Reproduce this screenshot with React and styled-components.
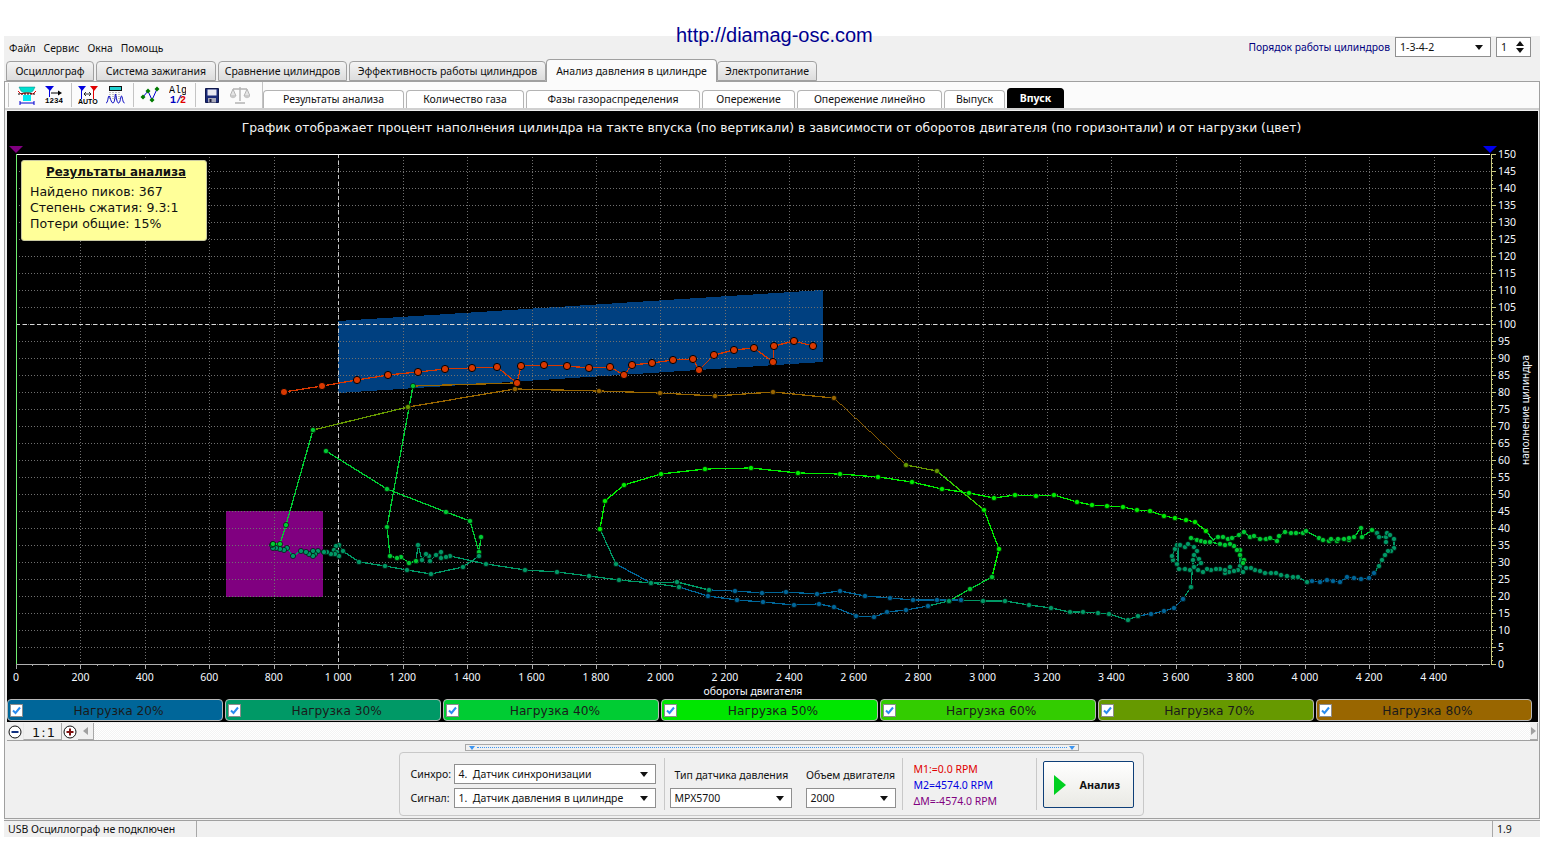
import React from "react";
import styled, { createGlobalStyle } from "styled-components";

const UI_FONT = `"Noto Sans", "DejaVu Sans", sans-serif`;
const CHART_FONT = `"DejaVu Sans", "Noto Sans", sans-serif`;

const C20 = "#006699";
const C30 = "#009966";
const C40 = "#00cc33";
const C50 = "#00ee00";
const C60 = "#33cc00";
const C70 = "#669900";
const C80 = "#996600";
const CRED = "#d83800";

// points read off the right part of the plot at 3x
const band = (pts) => pts.map(([x, y]) => [1000 + x / 3, 480 + y / 3]);

const traces = [
  { color: CRED, big: true, pts: [[284,392],[322,386],[357,380],[388,375],[418,372],[445,369],[472,368],[497,367],[517,383],[521,366],[544,365],[567,366],[589,368],[610,367],[624,375],[632,365],[652,363],[673,360],[693,359],[699,370],[714,355],[734,350],[754,348],[773,362],[774,346],[794,341],[813,346]] },
  { color: C80, pts: [[413,386],[515,383]], noDots: true },
  { color: C80, pts: [[408,407],[515,389],[599,391],[660,393],[715,396],[773,392],[834,398]] },
  { color: C80, pts: [[834,398],[906,465]], noDots: true, thin: true },
  { color: C70, pts: [[906,465],[937,471]] },
  { color: C70, pts: [[313,430],[408,407]] },
  { color: C60, pts: [[937,471],[984,510]], noDots: true },
  { color: C50, pts: [[984,510],[999,549],[992,577]] },
  { color: C40, pts: [[992,577],[970,589],[949,601]] },
  { color: C30, pts: [[949,601],[928,606]] },
  { color: C20, pts: [[928,606],[906,610],[887,612],[874,617],[856,616],[834,607],[819,604],[794,605],[763,602],[737,600],[708,596],[679,587]] },
  { color: C30, pts: [[679,587],[651,583]] },
  { color: C20, pts: [[651,583],[616,564]], noDots: true },
  { color: C30, pts: [[616,564],[600,529]] },
  { color: C50, pts: [[600,529],[605,501],[624,485],[661,474],[705,469],[751,468],[798,473],[840,474],[878,477],[912,482],[942,489],[969,493],[994,498],[1015,495],[1036,496],[1054,495],[1077,502],[1092,505],[1107,506],[1123,507],[1137,510],[1150,511],[1164,516],[1175,518],[1186,520],[1195,522],[1206,531]] },
  { color: C40, pts: [[1206,531],[1213,540]], noDots: true },
  { color: C40, pts: band([[573,174],[591,180],[603,183],[615,186],[630,186],[654,171],[669,171],[684,177],[696,174],[717,165],[732,156],[750,171],[762,168],[780,177],[798,177],[810,174],[831,183],[837,168],[855,156],[873,159],[888,159],[909,159],[918,153],[957,174],[969,180],[987,183],[993,177],[1011,183],[1014,177],[1032,177],[1047,180],[1047,174],[1062,171],[1083,144],[1086,171],[1116,150],[1131,159]]) },
  { color: C30, pts: band([[1131,159],[1137,171],[1158,171],[1158,186],[1161,159],[1170,165],[1182,177],[1182,204],[1173,213],[1164,213],[1155,225],[1146,240],[1137,258],[1122,279]]) },
  { color: C20, pts: band([[1122,279],[1107,294],[1083,297],[1062,294],[1041,291],[1020,306],[999,303],[981,300],[960,306],[936,303],[921,306]]) },
  { color: C30, pts: band([[921,306],[894,291],[879,291],[861,288],[843,285],[828,279],[813,279],[795,279],[780,273],[765,270],[753,264],[738,264],[729,276],[720,258],[714,270],[702,273],[690,261],[687,276],[675,279],[675,270],[660,267],[648,267],[633,270],[621,267],[609,276],[594,270],[582,261],[570,270],[555,267],[537,267],[531,252],[519,240],[516,228],[525,207],[531,195],[540,195]]) },
  { color: C30, pts: band([[540,195],[555,201],[564,192],[582,201],[591,213],[582,225],[597,237],[603,249],[582,261],[579,240],[573,321]]) },
  { color: C40, pts: band([[732,240],[729,249],[720,225],[720,210],[711,210],[702,198],[690,192],[675,195],[660,192],[630,186]]) },
  { color: C30, pts: band([[534,195],[534,252]]), noDots: true },
  { color: C30, pts: band([[720,225],[720,258]]), noDots: true },
  { color: C30, pts: band([[573,321],[549,357]]) },
  { color: C20, pts: band([[549,357],[522,384],[492,393],[453,402],[414,408]]) },
  { color: C30, pts: [...band([[414,408],[384,420],[327,402],[294,399],[249,396],[210,396],[153,384],[87,375],[15,363]]), [983,601],[961,600]] },
  { color: C20, pts: [[961,600],[937,600],[913,600],[890,598],[865,596],[840,591],[817,594],[786,592],[762,593],[735,591],[709,590]] },
  { color: C30, pts: [[709,590],[677,582],[651,583],[619,580],[589,576],[557,572],[525,570],[486,564],[450,556],[446,557],[441,558],[441,552],[436,555],[430,561],[429,556],[426,554],[422,560],[418,545],[416,561]] },
  { color: C40, pts: [[416,561],[409,563],[401,557],[397,558],[390,556],[387,527],[413,386]] },
  { color: C40, pts: [[326,451],[387,489],[446,512],[470,521],[479,552],[481,537]] },
  { color: C30, pts: [[479,556],[463,567],[431,574],[407,570],[385,566],[359,562],[343,551],[339,545],[336,546],[334,550],[337,552],[339,556],[335,554],[331,554],[327,552],[324,552]] },
  { color: C30, pts: [[324,552],[318,551],[315,554],[313,551],[313,556],[309,554],[306,552],[301,551],[293,556],[287,548],[284,550],[280,549],[276,548],[273,548],[272,545],[273,544]] },
  { color: C40, pts: [[273,544],[280,544],[286,525],[313,430]] },
];

const GlobalStyle = createGlobalStyle`
  html, body {
    margin: 0;
    padding: 0;
    background: #fff;
    overflow: hidden;
  }
`;

const Page = styled.div`
  width: 1552px;
  height: 842px;
  box-sizing: border-box;
  padding: 36px 12px 5px 4px;
  position: relative;
  font-family: ${UI_FONT};
  font-size: 11px;
  color: #111;
`;

const SiteLink = styled.div`
  position: absolute;
  left: 676px;
  top: 23px;
  font-family: "Liberation Sans", sans-serif;
  font-size: 20px;
  line-height: 24px;
  color: #000090;
`;

const Window = styled.div`
  height: 100%;
  background: #f0f0f0;
  display: flex;
  flex-direction: column;
`;

const MenuBar = styled.div`
  height: 24px;
  flex: none;
  display: flex;
  align-items: flex-start;
  padding-left: 5px;
`;

const MenuItem = styled.span`
  margin-right: 8px;
  line-height: 24px;
  font-size: 10.3px;
`;

const CylinderOrder = styled.div`
  margin-left: auto;
  margin-right: 9px;
  display: flex;
  align-items: center;
  height: 20px;
  margin-top: 1px;
`;

const OrderLabel = styled.span`
  color: #000080;
  font-size: 10.3px;
  margin-right: 5px;
`;

const Select = styled.div`
  box-sizing: border-box;
  width: ${(p) => p.$w}px;
  height: 20px;
  background: #fff;
  border: 1px solid #8f8f8f;
  display: flex;
  align-items: center;
  padding: 0 7px 0 4px;
  font-size: 10.5px;
  color: #111;
  white-space: pre;
`;

const Arrow = styled.i`
  margin-left: auto;
  width: 0;
  height: 0;
  border-left: 4px solid transparent;
  border-right: 4px solid transparent;
  border-top: 5px solid #111;
`;

const Spinner = styled(Select)`
  margin-left: 5px;
  position: relative;
`;

const SpinUp = styled.i`
  position: absolute;
  right: 6px;
  top: 3px;
  border-left: 4px solid transparent;
  border-right: 4px solid transparent;
  border-bottom: 5px solid #111;
`;

const SpinDown = styled.i`
  position: absolute;
  right: 6px;
  bottom: 3px;
  border-left: 4px solid transparent;
  border-right: 4px solid transparent;
  border-top: 5px solid #111;
`;

const MainTabs = styled.div`
  height: 21px;
  flex: none;
  display: flex;
  align-items: flex-end;
  padding-left: 2px;
  position: relative;
  z-index: 1;
`;

const MainTab = styled.div`
  box-sizing: border-box;
  width: ${(p) => p.$w}px;
  height: ${(p) => (p.$active ? 23 : 20)}px;
  margin-left: ${(p) => (p.$active ? -2 : 0)}px;
  margin-right: ${(p) => (p.$active ? 0 : 2)}px;
  margin-bottom: ${(p) => (p.$active ? -1 : 0)}px;
  border: 1px solid #a0a0a0;
  border-bottom: ${(p) => (p.$active ? "none" : "1px solid #a0a0a0")};
  border-radius: 4px 4px 0 0;
  background: ${(p) => (p.$active ? "#fbfbfb" : "linear-gradient(#f4f4f4, #dcdcdc)")};
  display: flex;
  align-items: center;
  justify-content: center;
  font-size: 10.5px;
  white-space: nowrap;
`;

const Content = styled.div`
  flex: 1;
  min-height: 0;
  box-sizing: border-box;
  border: 1px solid #a0a0a0;
  border-bottom: none;
  display: flex;
  flex-direction: column;
`;

const Toolbar = styled.div`
  height: 26px;
  flex: none;
  display: flex;
  align-items: center;
  padding-left: 3px;
  border-bottom: 2px solid #d0d0d0;
  background: #fbfbfb;
`;

const ToolGroup = styled.div`
  box-sizing: border-box;
  width: ${(p) => p.$w}px;
  height: 24px;
  border-left: 1px solid #c4c4c4;
  display: flex;
  align-items: center;
  flex: none;
`;

const ToolGap = styled.span`
  width: ${(p) => p.$w}px;
  flex: none;
`;

const ToolIcon = styled.svg`
  flex: none;
  display: block;
`;

const SubTabs = styled.div`
  display: flex;
  align-items: flex-end;
  align-self: flex-end;
  margin-left: 5px;
  border-left: 1px solid #c4c4c4;
  height: 26px;
`;

const SubTab = styled.div`
  box-sizing: border-box;
  width: ${(p) => p.$w}px;
  height: ${(p) => (p.$active ? 20 : 18)}px;
  margin-right: 2px;
  padding-bottom: 2px;
  border: 1px solid ${(p) => (p.$active ? "#000" : "#b4b4b4")};
  border-bottom: none;
  border-radius: 4px 4px 0 0;
  background: ${(p) => (p.$active ? "#000" : "#fff")};
  color: ${(p) => (p.$active ? "#fff" : "#111")};
  font-weight: ${(p) => (p.$active ? 700 : 400)};
  display: flex;
  align-items: center;
  justify-content: center;
  font-size: 10.5px;
  white-space: nowrap;
`;

const ChartPanel = styled.div`
  flex: none;
  height: 611px;
  margin: 1px 1px 0 2px;
  background: #000;
  display: flex;
  flex-direction: column;
  position: relative;
  overflow: hidden;
`;

const ChartTitle = styled.div`
  height: 25px;
  flex: none;
  display: flex;
  align-items: center;
  justify-content: center;
  padding-top: 9px;
  box-sizing: border-box;
  font-family: ${CHART_FONT};
  font-size: 12.36px;
  color: #f4f4f4;
  white-space: nowrap;
  transform: translateX(-1px);
`;

const PlotSvg = styled.svg`
  display: block;
  flex: none;
  width: 1531px;
  height: 563px;
`;

const PlotLabel = styled.text`
  font-family: ${UI_FONT};
  font-size: ${(p) => p.$size || 10.5}px;
  fill: #f4f8ff;
`;

const ResultsNote = styled.div`
  position: absolute;
  left: 14px;
  top: 49px;
  width: 186px;
  height: 81px;
  box-sizing: border-box;
  background: #ffff99;
  border: 1px solid #c8c8a0;
  border-radius: 3px;
  padding: 3px 8px;
  font-family: ${CHART_FONT};
  font-size: 12.55px;
  line-height: 16px;
  color: #111;
`;

const NoteTitle = styled.div`
  font-weight: 700;
  font-size: 11.85px;
  text-align: center;
  text-decoration: underline;
  margin-bottom: 4px;
  padding-left: 4px;
`;

const Legend = styled.div`
  height: 23px;
  flex: none;
  display: grid;
  grid-template-columns: repeat(7, 1fr);
  padding: 0 4px 1px 0;
  box-sizing: border-box;
`;

const LegendChip = styled.div`
  box-sizing: border-box;
  height: 22px;
  margin-right: 2px;
  background: ${(p) => p.$color};
  border: 1px solid #b8b8b8;
  border-radius: 4px;
  display: flex;
  align-items: center;
  position: relative;
  font-family: ${CHART_FONT};
  font-size: 12.2px;
  color: #1a1a1a;
`;

const LegendCheck = styled.span`
  box-sizing: border-box;
  position: absolute;
  left: 2px;
  top: 4px;
  width: 13px;
  height: 13px;
  background: #fff;
  border: 1px solid #8c8c8c;
  display: flex;
  align-items: center;
  justify-content: center;
`;

const LegendText = styled.span`
  flex: 1;
  text-align: center;
  padding: 1px 0 0 7px;
`;

const ZoomBar = styled.div`
  height: 17px;
  flex: none;
  margin: 1px 1px 0 2px;
  display: flex;
  border-bottom: 1px solid #a0a0a0;
  background: repeating-conic-gradient(#f3f3f3 0 25%, #fff 0 50%) 0 0 / 2px 2px;
`;

const RoundBtn = styled.div`
  width: 16px;
  flex: none;
  background: #f0f0f0;
  display: flex;
  align-items: center;
  justify-content: center;
`;

const ZoomValue = styled.div`
  width: 39px;
  flex: none;
  box-sizing: border-box;
  background: #f0f0f0;
  border-right: 1px solid #a8a8a8;
  border-bottom: 1px solid #a8a8a8;
  border-left: 1px solid #e8e8e8;
  display: flex;
  align-items: center;
  justify-content: center;
  font-family: ${CHART_FONT};
  font-size: 13px;
  letter-spacing: 1px;
  padding: 2px 0 0 3px;
`;

const ScrollArrow = styled.div`
  flex: none;
  box-sizing: border-box;
  background: #f0f0f0;
  border-right: 1px solid #a8a8a8;
  border-bottom: 1px solid #a8a8a8;
  display: flex;
  align-items: center;
  justify-content: center;
  margin-left: ${(p) => (p.$end ? "auto" : 0)};
  width: ${(p) => (p.$end ? 8 : 16)}px;
`;

const ScrollTip = styled.i`
  width: 0;
  height: 0;
  border-top: 4px solid transparent;
  border-bottom: 4px solid transparent;
  border-right: ${(p) => (p.$end ? "none" : "5px solid #a0a0a0")};
  border-left: ${(p) => (p.$end ? "5px solid #a0a0a0" : "none")};
`;

const BottomArea = styled.div`
  flex: 1;
  min-height: 0;
  display: flex;
  flex-direction: column;
  align-items: center;
  padding-top: 3px;
`;

const Splitter = styled.div`
  box-sizing: border-box;
  width: 614px;
  height: 7px;
  border: 1px solid #a8a8a8;
  flex: none;
  display: flex;
  align-items: center;
  justify-content: space-between;
  padding: 0 3px;
`;

const SplitterDots = styled.span`
  flex: 1;
  margin: 0 2px;
  border-top: 1px dotted #3d95f0;
`;

const SplitterTip = styled.i`
  width: 0;
  height: 0;
  border-left: 3px solid transparent;
  border-right: 3px solid transparent;
  border-top: 4px solid #3d95f0;
`;

const ControlGroup = styled.div`
  box-sizing: border-box;
  width: 745px;
  height: 64px;
  margin-top: 1px;
  margin-left: -2px;
  border: 1px solid #c8c8c8;
  border-radius: 4px;
  display: flex;
  align-items: stretch;
  padding: 5px 0;
  flex: none;
`;

const SignalCol = styled.div`
  width: 264px;
  flex: none;
  box-sizing: border-box;
  padding: 6px 0 0 11px;
  display: flex;
  flex-direction: column;
  gap: 4px;
`;

const SignalRow = styled.div`
  display: flex;
  align-items: center;
  height: 20px;
`;

const SignalLabel = styled.span`
  width: 43px;
  flex: none;
  font-size: 10.5px;
`;

const SensorCol = styled.div`
  box-sizing: border-box;
  width: 239px;
  flex: none;
  border-left: 1px solid #c8c8c8;
  border-right: 1px solid #c8c8c8;
  padding: 1px 0 0 5px;
  display: grid;
  grid-template-columns: 136px 90px;
  grid-template-rows: 29px 20px;
  align-items: center;
`;

const SensorLabel = styled.span`
  font-size: 10.5px;
  text-align: ${(p) => (p.$left ? "left" : "center")};
  padding: 3px 0 0 ${(p) => (p.$left ? 5 : 0)}px;
  white-space: nowrap;
`;

const RpmCol = styled.div`
  width: 133px;
  flex: none;
  box-sizing: border-box;
  padding: 3px 0 0 11px;
  display: flex;
  flex-direction: column;
  font-size: 10.5px;
  line-height: 16px;
`;

const RpmLine = styled.span`
  color: ${(p) => p.$color};
`;

const ActionCol = styled.div`
  flex: 1;
  border-left: 1px solid #c8c8c8;
  padding: 3px 0 0 6px;
`;

const AnalyzeButton = styled.div`
  box-sizing: border-box;
  width: 91px;
  height: 47px;
  border: 1px solid #0e3f78;
  border-radius: 2px;
  background: linear-gradient(#ffffff, #e9e9e4);
  display: flex;
  align-items: center;
  padding-left: 10px;
  font-weight: 700;
  font-size: 10.8px;
`;

const PlayMark = styled.i`
  width: 0;
  height: 0;
  border-top: 10px solid transparent;
  border-bottom: 10px solid transparent;
  border-left: 12px solid #00d020;
  margin-right: 14px;
`;

const StatusBar = styled.div`
  height: 19px;
  flex: none;
  box-sizing: border-box;
  border-top: 3px double #a0a0a0;
  display: flex;
`;

const StatusCell = styled.div`
  box-sizing: border-box;
  width: ${(p) => (p.$w ? p.$w + "px" : "auto")};
  flex: ${(p) => (p.$w ? "none" : 1)};
  border-left: ${(p) => (p.$first ? "none" : "1px solid #a8a8a8")};
  margin-right: ${(p) => (p.$last ? 0 : 2)}px;
  padding-left: 4px;
  font-size: 10.5px;
  line-height: 16px;
  white-space: nowrap;
`;

const Icon1 = () => (
  <ToolIcon width="20" height="19" viewBox="0 0 20 19">
    <path d="M2 1h16l-2 4-3 2H7L4 5z" fill="#00e0d0" stroke="#008080" strokeWidth=".5" />
    <path d="M1 5l3 3 4-1h4l4 1 3-3" fill="none" stroke="#e00000" />
    <path d="M1 8h18" stroke="#000" strokeDasharray="2 1" />
    <path d="M6 9h8v6H6z" fill="#00e8f0" />
    <path d="M3 17h14M3 15v4M17 15v4" stroke="#0000d0" fill="none" />
  </ToolIcon>
);

const Icon2 = () => (
  <ToolIcon width="18" height="21" viewBox="0 0 18 21">
    <path d="M0 1h9L5 6z" fill="#0000e0" />
    <path d="M4.500 3v9" stroke="#0000e0" />
    <path d="M6 8h8" stroke="#000" />
    <path d="M13 5.500L17 8l-4 2.500z" fill="#000" />
    <text x="0" y="18" fontFamily="Liberation Mono, monospace" fontSize="7.500" fontWeight="700" fill="#000">1234</text>
  </ToolIcon>
);

const Icon3 = () => (
  <ToolIcon width="20" height="21" viewBox="0 0 20 21">
    <path d="M0 1h8L4 6z" fill="#0000e0" />
    <path d="M12 1h8l-4 5z" fill="#e00000" />
    <path d="M3.500 3v11" stroke="#0000e0" />
    <path d="M15.500 3v11" stroke="#e00000" />
    <path d="M6 9h7M6 9l2-2M6 9l2 2M13 9l-2-2M13 9l-2 2" stroke="#000" fill="none" strokeWidth=".8" />
    <text x="0" y="19" fontFamily="Liberation Sans, sans-serif" fontSize="7" fontWeight="700" fill="#000">AUTO</text>
  </ToolIcon>
);

const Icon4 = () => (
  <ToolIcon width="19" height="18" viewBox="0 0 19 18">
    <rect x="3.500" y=".5" width="12" height="4" fill="#20d0d0" stroke="#111" />
    <path d="M4 6v7M7 6v7M10 6v7M13 6v7" stroke="#888" strokeDasharray="1 1" />
    <path d="M0 17c2 0 2-7 3-7s2 7 4 7 2-9 2.500-9 1 9 3 9 2-7 3-7 1 7 3 7" fill="none" stroke="#0000c0" />
  </ToolIcon>
);

const Icon5 = () => (
  <ToolIcon width="20" height="18" viewBox="0 0 20 18">
    <path d="M3 11L8 5l4 9 5-11" fill="none" stroke="#0000d0" />
    <path d="M3 8.500l2.500 2.500L3 13.500.5 11zM8 2.500L10.500 5 8 7.500 5.500 5zM12 11.500l2.500 2.500-2.500 2.500L9.500 14zM17 .5L19.500 3 17 5.500 14.500 3z" fill="#007a00" />
  </ToolIcon>
);

const Icon6 = () => (
  <ToolIcon width="17" height="22" viewBox="0 0 17 22">
    <text x="0" y="9" fontFamily="Liberation Mono, monospace" fontSize="10" fill="#000">Alg</text>
    <text x="1" y="18.500" fontFamily="Liberation Mono, monospace" fontSize="10" fontWeight="700" fill="#0000c0">1/</text>
    <text x="11" y="18.500" fontFamily="Liberation Mono, monospace" fontSize="10" fontWeight="700" fill="#e00000">2</text>
  </ToolIcon>
);

const Icon7 = () => (
  <ToolIcon width="14" height="15" viewBox="0 0 14 15">
    <path d="M.5.5h13v14H.5z" fill="#1a2a78" stroke="#10184c" />
    <path d="M2.500 1.500h9v6h-9z" fill="#e8e8f0" />
    <path d="M3 10h8v4.500H3z" fill="#a8a8b8" />
    <path d="M4.500 11h2v3h-2z" fill="#202040" />
  </ToolIcon>
);

const Icon8 = () => (
  <ToolIcon width="20" height="18" viewBox="0 0 20 18">
    <path d="M10 1v14M5 17h10M3 3h14" stroke="#b4b4b4" fill="none" strokeWidth="1.400" />
    <path d="M3 3l-3 7h6zM17 3l-3 7h6z" fill="#e4e4e4" stroke="#b4b4b4" />
    <path d="M0 10c1 3 5 3 6 0zM14 10c1 3 5 3 6 0z" fill="#c8c8c8" />
  </ToolIcon>
);

const CheckMark = () => (
  <svg width="11" height="11" viewBox="0 0 11 11">
    <path d="M2 5.500l2.500 2.500L9 2.500" fill="none" stroke="#2a8cf0" strokeWidth="2" />
  </svg>
);

const ZoomOutIcon = () => (
  <svg width="14" height="14" viewBox="0 0 14 14">
    <circle cx="7" cy="7" r="6" fill="#fff" stroke="#111" />
    <path d="M3.500 7h7" stroke="#103080" strokeWidth="2" />
  </svg>
);

const ZoomInIcon = () => (
  <svg width="14" height="14" viewBox="0 0 14 14">
    <circle cx="7" cy="7" r="6" fill="#fff" stroke="#111" />
    <path d="M3.500 7h7M7 3.500v7" stroke="#801010" strokeWidth="2" />
  </svg>
);

const rpmTicks = [];
for (let i = 0; i <= 91; i++) rpmTicks.push(i);

const formatRpm = (v) => (v >= 1000 ? `${Math.floor(v / 1000)} ${String(v % 1000).padStart(3, "0")}` : String(v));
const rpmX = (v) => 16 + v * 0.3222;
const fillY = (v) => 664 - v * 3.4;

const yValues = [];
for (let v = 0; v <= 150; v += 5) yValues.push(v);
const xValues = [];
for (let v = 0; v <= 4400; v += 200) xValues.push(v);

const Plot = () => (
  <PlotSvg viewBox="7 136 1531 563">
    <polygon points="338,321 823,290 823,362 338,393" fill="#004080" shapeRendering="crispEdges" />
    <rect x="226" y="511" width="97" height="86" fill="#800080" />
    {yValues.map((v) => (
      <line key={v} x1="16" x2="1490" y1={fillY(v)} y2={fillY(v)} stroke="#707070" strokeDasharray="1 2" shapeRendering="crispEdges" />
    ))}
    {xValues.map((v) => (
      <line key={v} x1={Math.round(rpmX(v))} x2={Math.round(rpmX(v))} y1="154" y2="664" stroke="#707070" strokeDasharray="1 2" shapeRendering="crispEdges" />
    ))}
    <line x1="338" x2="338" y1="154" y2="664" stroke="#c8c8c8" strokeDasharray="4 3" shapeRendering="crispEdges" />
    <line x1="16" x2="1490" y1="324" y2="324" stroke="#d8d8d8" strokeDasharray="4 3" shapeRendering="crispEdges" />
    <line x1="16" x2="1490" y1="154" y2="154" stroke="#fff" shapeRendering="crispEdges" />
    <line x1="16" x2="1490" y1="664" y2="664" stroke="#b0b0b0" shapeRendering="crispEdges" />
    <line x1="16" x2="16" y1="154" y2="664" stroke="#70f070" shapeRendering="crispEdges" />
    <line x1="1491" x2="1491" y1="154" y2="664" stroke="#c8c880" shapeRendering="crispEdges" />
    {rpmTicks.map((i) => (
      <line key={i} x1={Math.round(16 + i * 16.11)} x2={Math.round(16 + i * 16.11)} y1="664" y2={i % 4 === 0 ? 669 : 666} stroke="#a8a8a8" shapeRendering="crispEdges" />
    ))}
    {yValues.slice(0, -1).map((v) => [0, 1, 2, 3].map((k) => (
      <line key={`${v}-${k}`} x1="1491" x2={k === 0 ? 1496 : 1493} y1={Math.round(fillY(v) - k * 4.25)} y2={Math.round(fillY(v) - k * 4.25)} stroke="#c8c880" shapeRendering="crispEdges" />
    )))}
    <line x1="1491" x2="1496" y1="154" y2="154" stroke="#c8c880" shapeRendering="crispEdges" />
    {traces.map((t, i) => (
      <polyline key={i} points={t.pts.map((p) => p.join(",")).join(" ")} fill="none" stroke={t.color} strokeWidth={t.thin ? 0.9 : 1.3} shapeRendering="crispEdges" />
    ))}
    {traces.filter((t) => !t.noDots).map((t, i) => t.pts.map(([x, y], j) => (
      <circle key={`${i}-${j}`} cx={x} cy={y} r={t.big ? 3.6 : 2.6} fill={t.color} stroke="#000" strokeWidth={t.big ? 1 : 0.6} />
    )))}
    <polygon points="9,146 23,146 16,153" fill="#800080" />
    <polygon points="1483,146 1497,146 1490,153" fill="#0000ee" />
    {yValues.map((v) => (
      <PlotLabel key={v} x="1498" y={fillY(v) + 4}>{v}</PlotLabel>
    ))}
    {xValues.map((v) => (
      <PlotLabel key={v} x={rpmX(v)} y="681" textAnchor="middle">{formatRpm(v)}</PlotLabel>
    ))}
    <PlotLabel x="753" y="695" textAnchor="middle">обороты двигателя</PlotLabel>
    <PlotLabel $size={10} x="1529" y="410" textAnchor="middle" transform="rotate(-90 1529 410)">наполнение цилиндра</PlotLabel>
  </PlotSvg>
);

const loads = [
  { label: "Нагрузка 20%", color: C20 },
  { label: "Нагрузка 30%", color: C30 },
  { label: "Нагрузка 40%", color: C40 },
  { label: "Нагрузка 50%", color: "#00e600" },
  { label: "Нагрузка 60%", color: C60 },
  { label: "Нагрузка 70%", color: C70 },
  { label: "Нагрузка 80%", color: C80 },
];

const mainTabs = [
  ["Осциллограф", 88], ["Система зажигания", 120], ["Сравнение цилиндров", 129],
  ["Эффективность работы цилиндров", 197], ["Анализ давления в цилиндре", 171, true], ["Электропитание", 100],
];

const subTabs = [
  ["Результаты анализа", 141], ["Количество газа", 118], ["Фазы газораспределения", 174],
  ["Опережение", 93], ["Опережение линейно", 145], ["Выпуск", 61], ["Впуск", 57, true],
];

const App = () => (
  <Page>
    <GlobalStyle />
    <SiteLink>http://diamag-osc.com</SiteLink>
    <Window>
      <MenuBar>
        <MenuItem>Файл</MenuItem>
        <MenuItem>Сервис</MenuItem>
        <MenuItem>Окна</MenuItem>
        <MenuItem>Помощь</MenuItem>
        <CylinderOrder>
          <OrderLabel>Порядок работы цилиндров</OrderLabel>
          <Select $w={96}>1-3-4-2<Arrow /></Select>
          <Spinner $w={35}>1<SpinUp /><SpinDown /></Spinner>
        </CylinderOrder>
      </MenuBar>
      <MainTabs>
        {mainTabs.map(([label, w, active]) => (
          <MainTab key={label} $w={w} $active={active}>{label}</MainTab>
        ))}
      </MainTabs>
      <Content>
        <Toolbar>
          <ToolGroup $w={63}><ToolGap $w={8} /><Icon1 /><ToolGap $w={8} /><Icon2 /></ToolGroup>
          <ToolGroup $w={62}><ToolGap $w={6} /><Icon3 /><ToolGap $w={8} /><Icon4 /></ToolGroup>
          <ToolGroup $w={62}><ToolGap $w={6} /><Icon5 /><ToolGap $w={9} /><Icon6 /></ToolGroup>
          <ToolGroup $w={62}><ToolGap $w={9} /><Icon7 /><ToolGap $w={11} /><Icon8 /></ToolGroup>
          <SubTabs>
            {subTabs.map(([label, w, active]) => (
              <SubTab key={label} $w={w} $active={active}>{label}</SubTab>
            ))}
          </SubTabs>
        </Toolbar>
        <ChartPanel>
          <ChartTitle>График отображает процент наполнения цилиндра на такте впуска (по вертикали) в зависимости от оборотов двигателя (по горизонтали) и от нагрузки (цвет)</ChartTitle>
          <Plot />
          <ResultsNote>
            <NoteTitle>Результаты анализа</NoteTitle>
            <div>Найдено пиков: 367</div>
            <div>Степень сжатия: 9.3:1</div>
            <div>Потери общие: 15%</div>
          </ResultsNote>
          <Legend>
            {loads.map((l) => (
              <LegendChip key={l.label} $color={l.color}>
                <LegendCheck><CheckMark /></LegendCheck>
                <LegendText>{l.label}</LegendText>
              </LegendChip>
            ))}
          </Legend>
        </ChartPanel>
        <ZoomBar>
          <RoundBtn><ZoomOutIcon /></RoundBtn>
          <ZoomValue>1:1</ZoomValue>
          <RoundBtn><ZoomInIcon /></RoundBtn>
          <ScrollArrow><ScrollTip /></ScrollArrow>
          <ScrollArrow $end><ScrollTip $end /></ScrollArrow>
        </ZoomBar>
        <BottomArea>
          <Splitter><SplitterTip /><SplitterDots /><SplitterTip /></Splitter>
          <ControlGroup>
            <SignalCol>
              <SignalRow><SignalLabel>Синхро:</SignalLabel><Select $w={202}>{"4.  Датчик синхронизации"}<Arrow /></Select></SignalRow>
              <SignalRow><SignalLabel>Сигнал:</SignalLabel><Select $w={202}>{"1.  Датчик давления в цилиндре"}<Arrow /></Select></SignalRow>
            </SignalCol>
            <SensorCol>
              <SensorLabel $left>Тип датчика давления</SensorLabel>
              <SensorLabel>Объем двигателя</SensorLabel>
              <Select $w={122}>MPX5700<Arrow /></Select>
              <Select $w={90}>2000<Arrow /></Select>
            </SensorCol>
            <RpmCol>
              <RpmLine $color="#e00000">M1:=0.0 RPM</RpmLine>
              <RpmLine $color="#0000e0">M2=4574.0 RPM</RpmLine>
              <RpmLine $color="#800080">ΔM=-4574.0 RPM</RpmLine>
            </RpmCol>
            <ActionCol>
              <AnalyzeButton><PlayMark />Анализ</AnalyzeButton>
            </ActionCol>
          </ControlGroup>
        </BottomArea>
      </Content>
      <StatusBar>
        <StatusCell $first $w={190}>USB Осциллограф не подключен</StatusCell>
        <StatusCell />
        <StatusCell $last $w={48}>1.9</StatusCell>
      </StatusBar>
    </Window>
  </Page>
);

export default App;
